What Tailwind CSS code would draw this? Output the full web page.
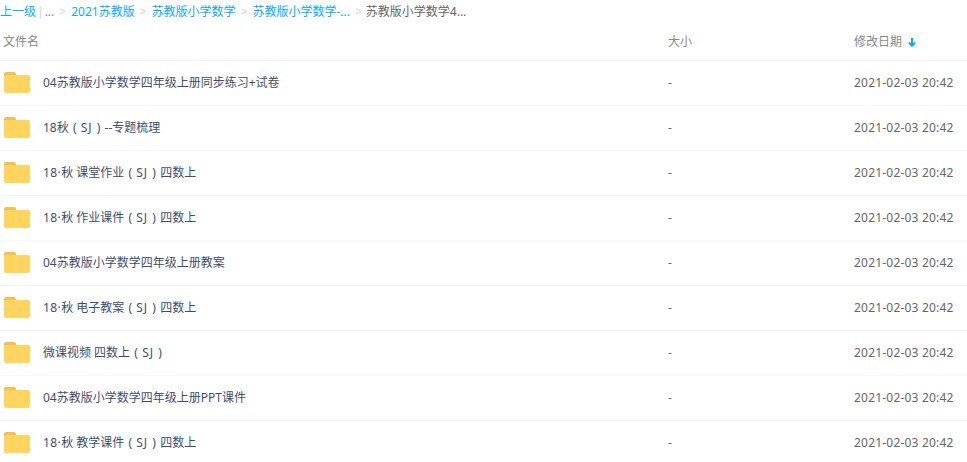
<!DOCTYPE html>
<html lang="zh-CN">
<head>
    <meta charset="UTF-8">
    <title>文件列表</title>
    <script src="https://cdn.jsdelivr.net/npm/@tailwindcss/browser@4"></script>
</head>
<body class="bg-white h-[462px] overflow-hidden font-['Noto_Sans','Noto_Sans_CJK_SC',sans-serif] text-xs text-[#424e67]">
    <!-- Breadcrumb -->
    <div class="h-[22px] pt-px flex items-center text-[#09aaff] whitespace-nowrap">
        <span>上一级</span>
        <span class="text-[#c4d8f4] ml-[1px] mr-[1px]">|</span>
        <span class="text-[#888]">...</span>
        <span class="text-[#c4d8f4] mx-[5px]">&gt;</span>
        <span>2021苏教版</span>
        <span class="text-[#c4d8f4] mx-[5px]">&gt;</span>
        <span>苏教版小学数学</span>
        <span class="text-[#c4d8f4] mx-[5px]">&gt;</span>
        <span>苏教版小学数学-...</span>
        <span class="text-[#c4d8f4] ml-[5px] mr-[4px]">&gt;</span>
        <span class="text-[#666]">苏教版小学数学4...</span>
    </div>

    <!-- Header -->
    <div class="h-[39px] pt-px flex items-center border-b border-[#f2f6fd] text-[#888]">
        <div class="w-[668px] pl-[3px]">文件名</div>
        <div class="w-[186px]">大小</div>
        <div class="flex items-center gap-[6px]">
            修改日期
            <svg class="mt-px" width="8" height="9" viewBox="0 0 8 9"><path d="M4 0V8M0.8 4.6L4 7.8L7.2 4.6" fill="none" stroke="#09aaff" stroke-width="2"/></svg>
        </div>
    </div>

    <!-- Rows -->
    <div class="h-[45px] flex items-center border-b border-[#f2f6fd]">
        <div class="w-[668px] flex items-center pl-1">
            <svg class="mr-[13px] mb-px" width="26" height="21" viewBox="0 0 26 21"><path d="M0 2a2 2 0 0 1 2-2h8a2 2 0 0 1 2 2v2H0z" fill="#f3c14f"/><rect y="3" width="26" height="18" rx="2" fill="#ffd45f"/></svg>
            <span>04苏教版小学数学四年级上册同步练习+试卷</span>
        </div>
        <div class="w-[186px] text-[#666]">-</div>
        <div class="text-[#666] tracking-[0.2px]">2021-02-03 20:42</div>
    </div>
    <div class="h-[45px] flex items-center border-b border-[#f2f6fd]">
        <div class="w-[668px] flex items-center pl-1">
            <svg class="mr-[13px] mb-px" width="26" height="21" viewBox="0 0 26 21"><path d="M0 2a2 2 0 0 1 2-2h8a2 2 0 0 1 2 2v2H0z" fill="#f3c14f"/><rect y="3" width="26" height="18" rx="2" fill="#ffd45f"/></svg>
            <span>18秋<span class="inline-block w-3 text-center">(</span><span class="tracking-[1px]">SJ</span><span class="inline-block w-3 text-center">)</span>--专题梳理</span>
        </div>
        <div class="w-[186px] text-[#666]">-</div>
        <div class="text-[#666] tracking-[0.2px]">2021-02-03 20:42</div>
    </div>
    <div class="h-[45px] flex items-center border-b border-[#f2f6fd]">
        <div class="w-[668px] flex items-center pl-1">
            <svg class="mr-[13px] mb-px" width="26" height="21" viewBox="0 0 26 21"><path d="M0 2a2 2 0 0 1 2-2h8a2 2 0 0 1 2 2v2H0z" fill="#f3c14f"/><rect y="3" width="26" height="18" rx="2" fill="#ffd45f"/></svg>
            <span><span class="tracking-[0.4px]">18·</span>秋 课堂作业<span class="inline-block w-3 text-center">(</span><span class="tracking-[1px]">SJ</span><span class="inline-block w-3 text-center">)</span>四数上</span>
        </div>
        <div class="w-[186px] text-[#666]">-</div>
        <div class="text-[#666] tracking-[0.2px]">2021-02-03 20:42</div>
    </div>
    <div class="h-[45px] flex items-center border-b border-[#f2f6fd]">
        <div class="w-[668px] flex items-center pl-1">
            <svg class="mr-[13px] mb-px" width="26" height="21" viewBox="0 0 26 21"><path d="M0 2a2 2 0 0 1 2-2h8a2 2 0 0 1 2 2v2H0z" fill="#f3c14f"/><rect y="3" width="26" height="18" rx="2" fill="#ffd45f"/></svg>
            <span><span class="tracking-[0.4px]">18·</span>秋 作业课件<span class="inline-block w-3 text-center">(</span><span class="tracking-[1px]">SJ</span><span class="inline-block w-3 text-center">)</span>四数上</span>
        </div>
        <div class="w-[186px] text-[#666]">-</div>
        <div class="text-[#666] tracking-[0.2px]">2021-02-03 20:42</div>
    </div>
    <div class="h-[45px] flex items-center border-b border-[#f2f6fd]">
        <div class="w-[668px] flex items-center pl-1">
            <svg class="mr-[13px] mb-px" width="26" height="21" viewBox="0 0 26 21"><path d="M0 2a2 2 0 0 1 2-2h8a2 2 0 0 1 2 2v2H0z" fill="#f3c14f"/><rect y="3" width="26" height="18" rx="2" fill="#ffd45f"/></svg>
            <span>04苏教版小学数学四年级上册教案</span>
        </div>
        <div class="w-[186px] text-[#666]">-</div>
        <div class="text-[#666] tracking-[0.2px]">2021-02-03 20:42</div>
    </div>
    <div class="h-[45px] flex items-center border-b border-[#f2f6fd]">
        <div class="w-[668px] flex items-center pl-1">
            <svg class="mr-[13px] mb-px" width="26" height="21" viewBox="0 0 26 21"><path d="M0 2a2 2 0 0 1 2-2h8a2 2 0 0 1 2 2v2H0z" fill="#f3c14f"/><rect y="3" width="26" height="18" rx="2" fill="#ffd45f"/></svg>
            <span><span class="tracking-[0.4px]">18·</span>秋 电子教案<span class="inline-block w-3 text-center">(</span><span class="tracking-[1px]">SJ</span><span class="inline-block w-3 text-center">)</span>四数上</span>
        </div>
        <div class="w-[186px] text-[#666]">-</div>
        <div class="text-[#666] tracking-[0.2px]">2021-02-03 20:42</div>
    </div>
    <div class="h-[45px] flex items-center border-b border-[#f2f6fd]">
        <div class="w-[668px] flex items-center pl-1">
            <svg class="mr-[13px] mb-px" width="26" height="21" viewBox="0 0 26 21"><path d="M0 2a2 2 0 0 1 2-2h8a2 2 0 0 1 2 2v2H0z" fill="#f3c14f"/><rect y="3" width="26" height="18" rx="2" fill="#ffd45f"/></svg>
            <span>微课视频 四数上<span class="inline-block w-3 text-center">(</span><span class="tracking-[1px]">SJ</span><span class="inline-block w-3 text-center">)</span></span>
        </div>
        <div class="w-[186px] text-[#666]">-</div>
        <div class="text-[#666] tracking-[0.2px]">2021-02-03 20:42</div>
    </div>
    <div class="h-[45px] flex items-center border-b border-[#f2f6fd]">
        <div class="w-[668px] flex items-center pl-1">
            <svg class="mr-[13px] mb-px" width="26" height="21" viewBox="0 0 26 21"><path d="M0 2a2 2 0 0 1 2-2h8a2 2 0 0 1 2 2v2H0z" fill="#f3c14f"/><rect y="3" width="26" height="18" rx="2" fill="#ffd45f"/></svg>
            <span>04苏教版小学数学四年级上册PPT课件</span>
        </div>
        <div class="w-[186px] text-[#666]">-</div>
        <div class="text-[#666] tracking-[0.2px]">2021-02-03 20:42</div>
    </div>
    <div class="h-[45px] flex items-center border-b border-[#f2f6fd]">
        <div class="w-[668px] flex items-center pl-1">
            <svg class="mr-[13px] mb-px" width="26" height="21" viewBox="0 0 26 21"><path d="M0 2a2 2 0 0 1 2-2h8a2 2 0 0 1 2 2v2H0z" fill="#f3c14f"/><rect y="3" width="26" height="18" rx="2" fill="#ffd45f"/></svg>
            <span><span class="tracking-[0.4px]">18·</span>秋 教学课件<span class="inline-block w-3 text-center">(</span><span class="tracking-[1px]">SJ</span><span class="inline-block w-3 text-center">)</span>四数上</span>
        </div>
        <div class="w-[186px] text-[#666]">-</div>
        <div class="text-[#666] tracking-[0.2px]">2021-02-03 20:42</div>
    </div>
</body>
</html>
